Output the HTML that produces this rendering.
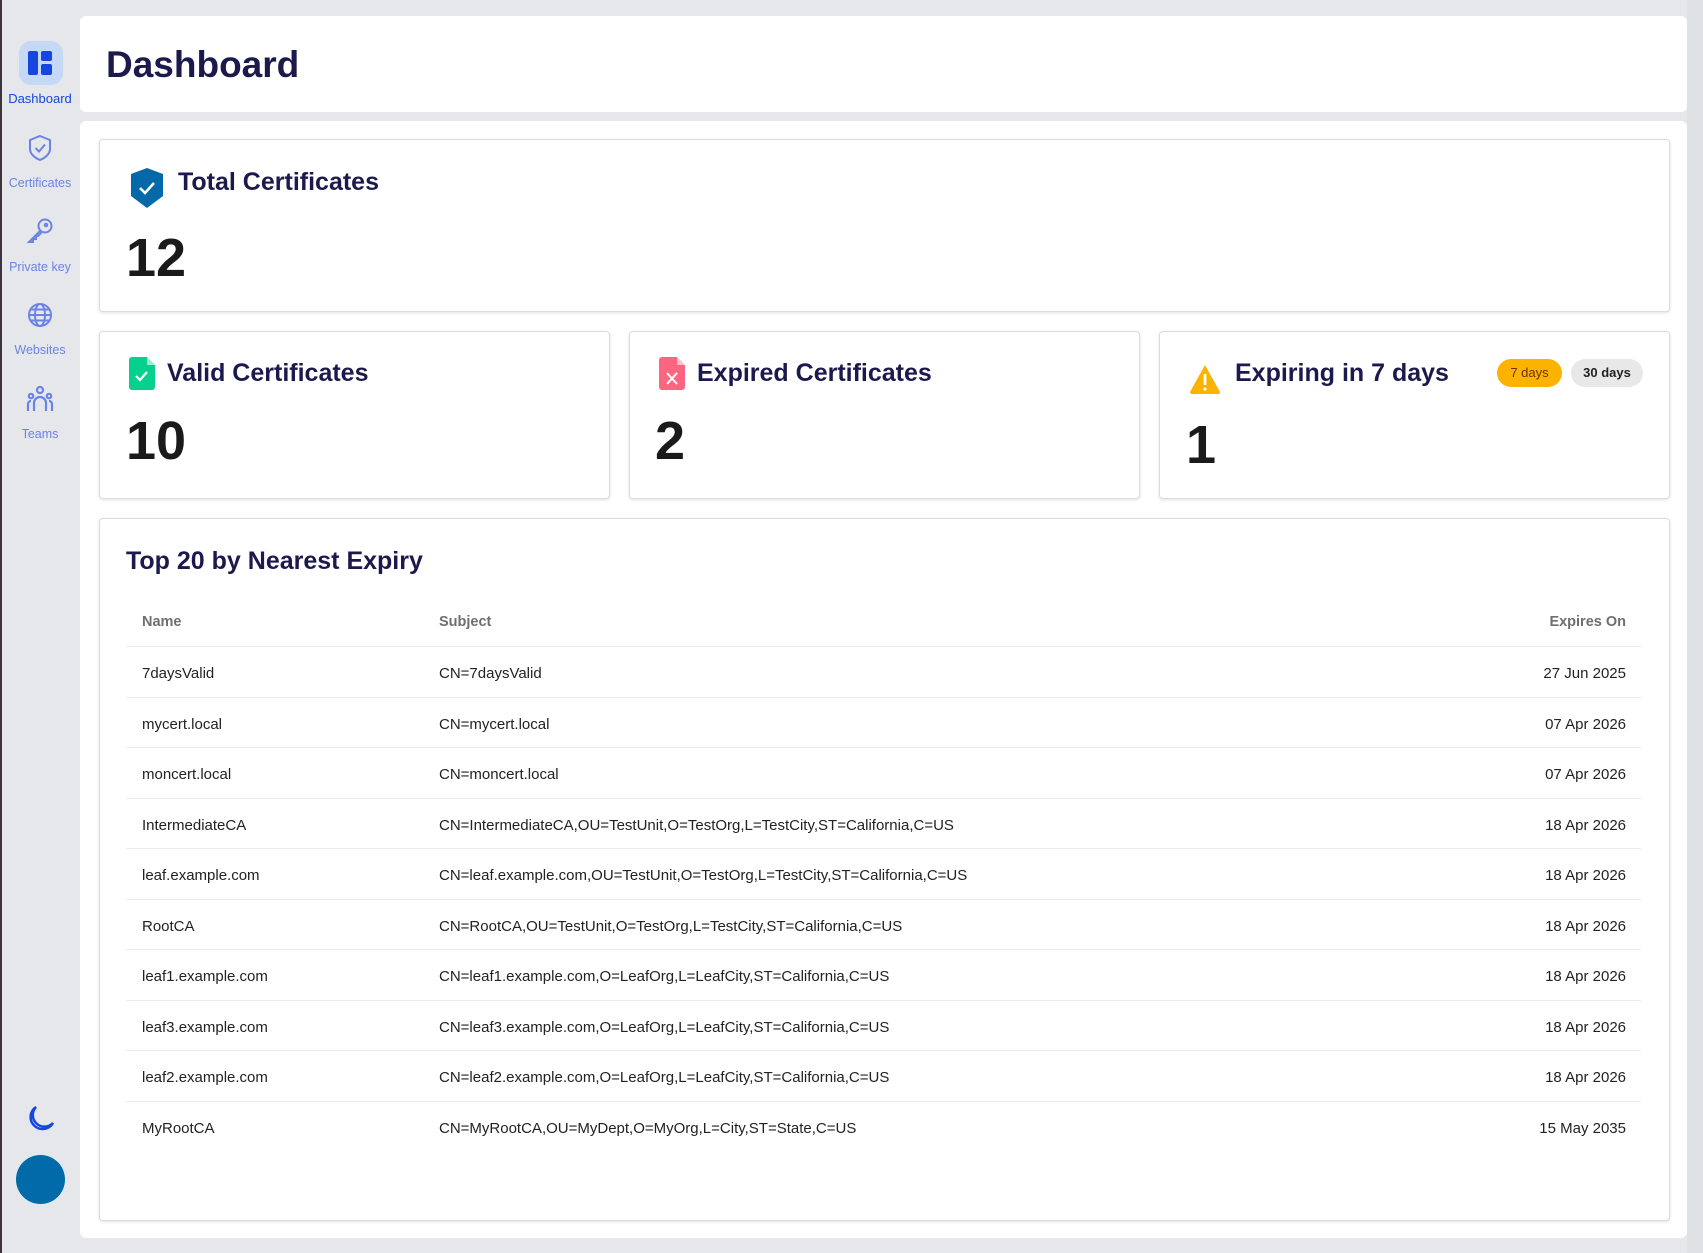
<!DOCTYPE html>
<html><head><meta charset="utf-8"><style>
*{margin:0;padding:0;box-sizing:border-box}
body{width:1703px;height:1253px;background:#e6e7eb;font-family:"Liberation Sans",sans-serif;position:relative;overflow:hidden}
.abs{position:absolute}
.side-line{left:0;top:0;width:2px;height:1253px;background:#3b3540}
.nav{position:absolute;left:0;width:80px;text-align:center;font-size:12.5px;color:#6b83e6}
.card{position:absolute;background:#fff;border:1px solid #dcdcdc;border-radius:4px;box-shadow:0 1px 3px rgba(0,0,0,.12)}
.ct{position:absolute;font-size:25px;font-weight:bold;color:#1c1a4d;white-space:nowrap}
.num{position:absolute;font-size:54px;font-weight:bold;color:#1a1a1a}
.th{position:absolute;font-size:14.5px;font-weight:bold;color:#6f6f6f;white-space:nowrap}
.row{position:absolute;left:126px;width:1515px;height:50.5px;border-top:1px solid #ececec;font-size:15px;color:#222}
.row span{position:absolute;top:18px;white-space:nowrap}
</style></head><body>
<div class="abs side-line"></div>
<div class="abs" style="left:19px;top:41px;width:44px;height:44px;border-radius:12px;background:#c5d8f5"></div>
<svg class="abs" style="left:28px;top:51px" width="24" height="24" viewBox="0 0 24 24"><rect x="0" y="0" width="10" height="24" rx="2" fill="#1546e0"/><rect x="13" y="0" width="11" height="10" rx="2" fill="#1546e0"/><rect x="13" y="13" width="11" height="11" rx="2" fill="#1546e0"/></svg>
<div class="nav" style="top:91px;color:#1546e0;font-size:13px">Dashboard</div>
<svg class="abs" style="left:27px;top:134px" width="26" height="28" viewBox="0 0 26 28" fill="none" stroke="#6b83e6" stroke-width="2"><path d="M13 2 L23 6 V15 C23 20 18 24 13 26 C8 24 3 20 3 15 V6 Z"/><path d="M8.5 14 L12 17.5 L18 10.5"/></svg>
<div class="nav" style="top:176px">Certificates</div>
<svg class="abs" style="left:26px;top:217px" width="28" height="28" viewBox="0 0 28 28" fill="none" stroke="#6b83e6" stroke-width="2"><circle cx="19" cy="9" r="6.5"/><circle cx="20" cy="8" r="1.3"/><path d="M14.5 13.5 L3 25 H7 V22 H10 V19 H12 L15.5 15.5"/></svg>
<div class="nav" style="top:260px">Private key</div>
<svg class="abs" style="left:27px;top:302px" width="26" height="26" viewBox="0 0 26 26" fill="none" stroke="#6b83e6" stroke-width="2"><circle cx="13" cy="13" r="11"/><ellipse cx="13" cy="13" rx="5" ry="11"/><path d="M2 13 H24 M4 7.5 H22 M4 18.5 H22"/></svg>
<div class="nav" style="top:343px">Websites</div>
<svg class="abs" style="left:26px;top:385px" width="28" height="28" viewBox="0 0 28 28" fill="none" stroke="#6b83e6" stroke-width="2.2"><circle cx="14" cy="5" r="3"/><circle cx="5" cy="11" r="2.2"/><circle cx="23" cy="11" r="2.2"/><path d="M8 26 V18 A6 6 0 0 1 20 18 V26"/><path d="M2 26 V19 A3 3 0 0 1 5 16"/><path d="M26 26 V19 A3 3 0 0 0 23 16"/></svg>
<div class="nav" style="top:427px">Teams</div>
<svg class="abs" style="left:25px;top:1104px" width="30" height="30" viewBox="0 0 30 30" fill="none" stroke="#1546e0" stroke-width="2.5"><path d="M11 3 A12 12 0 1 0 28 19 A10 10 0 0 1 11 3 Z"/></svg>
<div class="abs" style="left:16px;top:1155px;width:49px;height:49px;border-radius:50%;background:#006ba8"></div>
<div class="abs" style="left:80px;top:16px;width:1607px;height:96px;background:#fff;border-radius:6px"></div>
<div class="abs" style="left:106px;top:44px;font-size:37px;font-weight:bold;color:#1c1a4d">Dashboard</div>
<div class="abs" style="left:1687px;top:0;width:16px;height:1253px;background:#e0e1e5"></div>
<div class="abs" style="left:80px;top:121px;width:1607px;height:1117px;background:#fff;border-radius:6px"></div>
<div class="card" style="left:99px;top:139px;width:1571px;height:173px"></div>
<svg class="abs" style="left:130px;top:167px" width="34" height="42" viewBox="0 0 34 42"><path d="M17 1 L33 7 V29 L17 41 L1 29 V7 Z" fill="#0568a8"/><path d="M10 21 L15 26 L24 16" fill="none" stroke="#fff" stroke-width="2.6"/></svg>
<div class="ct" style="left:178px;top:168px">Total Certificates</div>
<div class="num" style="left:126px;top:227px">12</div>
<div class="card" style="left:99px;top:331px;width:511px;height:168px"></div>
<svg class="abs" style="left:129px;top:357px" width="26" height="33" viewBox="0 0 26 33"><path d="M3 0 H18 L26 8 V30 A3 3 0 0 1 23 33 H3 A3 3 0 0 1 0 30 V3 A3 3 0 0 1 3 0 Z" fill="#05d18e"/><path d="M18 0 V8 H26" fill="#fff" opacity=".6"/><path d="M7 19 L11 23 L18 15" fill="none" stroke="#fff" stroke-width="2.2"/></svg>
<div class="ct" style="left:167px;top:359px">Valid Certificates</div>
<div class="num" style="left:126px;top:410px">10</div>
<div class="card" style="left:629px;top:331px;width:511px;height:168px"></div>
<svg class="abs" style="left:659px;top:357px" width="26" height="33" viewBox="0 0 26 33"><path d="M3 0 H18 L26 8 V30 A3 3 0 0 1 23 33 H3 A3 3 0 0 1 0 30 V3 A3 3 0 0 1 3 0 Z" fill="#fd6581"/><path d="M18 0 V8 H26" fill="#fff" opacity=".6"/><path d="M8 16 L18 27 M18 16 L8 27" fill="none" stroke="#fff" stroke-width="2"/></svg>
<div class="ct" style="left:697px;top:359px">Expired Certificates</div>
<div class="num" style="left:655px;top:410px">2</div>
<div class="card" style="left:1159px;top:331px;width:511px;height:168px"></div>
<svg class="abs" style="left:1189px;top:363px" width="32" height="32" viewBox="0 0 32 32"><path d="M16 2 L31 29 A2 2 0 0 1 29 31 H3 A2 2 0 0 1 1 29 Z" fill="#fbb300"/><path d="M16 11 V22" stroke="#fff" stroke-width="2.8"/><circle cx="16" cy="26" r="1.6" fill="#fff"/></svg>
<div class="ct" style="left:1235px;top:359px">Expiring in 7 days</div>
<div class="abs" style="left:1497px;top:359px;width:65px;height:28px;border-radius:14px;background:#fbb300;color:#6b3200;font-size:13px;text-align:center;line-height:28px">7 days</div>
<div class="abs" style="left:1571px;top:359px;width:72px;height:28px;border-radius:14px;background:#e8e8e8;color:#222;font-size:13px;font-weight:bold;text-align:center;line-height:28px">30 days</div>
<div class="num" style="left:1186px;top:414px">1</div>
<div class="card" style="left:99px;top:518px;width:1571px;height:703px"></div>
<div class="ct" style="left:126px;top:547px">Top 20 by Nearest Expiry</div>
<div class="th" style="left:142px;top:614px">Name</div>
<div class="th" style="left:439px;top:614px">Subject</div>
<div class="th" style="left:1500px;top:614px;width:126px;text-align:right">Expires On</div>
<div class="row" style="top:646px"><span style="left:16px">7daysValid</span><span style="left:313px">CN=7daysValid</span><span style="right:15px">27 Jun 2025</span></div>
<div class="row" style="top:696.5px"><span style="left:16px">mycert.local</span><span style="left:313px">CN=mycert.local</span><span style="right:15px">07 Apr 2026</span></div>
<div class="row" style="top:747px"><span style="left:16px">moncert.local</span><span style="left:313px">CN=moncert.local</span><span style="right:15px">07 Apr 2026</span></div>
<div class="row" style="top:797.5px"><span style="left:16px">IntermediateCA</span><span style="left:313px">CN=IntermediateCA,OU=TestUnit,O=TestOrg,L=TestCity,ST=California,C=US</span><span style="right:15px">18 Apr 2026</span></div>
<div class="row" style="top:848px"><span style="left:16px">leaf.example.com</span><span style="left:313px">CN=leaf.example.com,OU=TestUnit,O=TestOrg,L=TestCity,ST=California,C=US</span><span style="right:15px">18 Apr 2026</span></div>
<div class="row" style="top:898.5px"><span style="left:16px">RootCA</span><span style="left:313px">CN=RootCA,OU=TestUnit,O=TestOrg,L=TestCity,ST=California,C=US</span><span style="right:15px">18 Apr 2026</span></div>
<div class="row" style="top:949px"><span style="left:16px">leaf1.example.com</span><span style="left:313px">CN=leaf1.example.com,O=LeafOrg,L=LeafCity,ST=California,C=US</span><span style="right:15px">18 Apr 2026</span></div>
<div class="row" style="top:999.5px"><span style="left:16px">leaf3.example.com</span><span style="left:313px">CN=leaf3.example.com,O=LeafOrg,L=LeafCity,ST=California,C=US</span><span style="right:15px">18 Apr 2026</span></div>
<div class="row" style="top:1050px"><span style="left:16px">leaf2.example.com</span><span style="left:313px">CN=leaf2.example.com,O=LeafOrg,L=LeafCity,ST=California,C=US</span><span style="right:15px">18 Apr 2026</span></div>
<div class="row" style="top:1100.5px"><span style="left:16px">MyRootCA</span><span style="left:313px">CN=MyRootCA,OU=MyDept,O=MyOrg,L=City,ST=State,C=US</span><span style="right:15px">15 May 2035</span></div>
</body></html>
